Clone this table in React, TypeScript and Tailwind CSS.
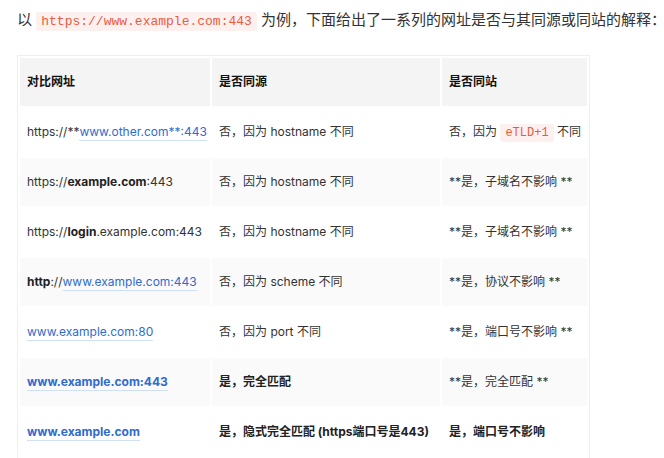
import React from "react";

const font = {
  fontFamily: '"Inter", "Noto Sans CJK SC", sans-serif',
};

function Link({ children, bold }: { children: React.ReactNode; bold?: boolean }) {
  return (
    <span
      className={`text-[#2f6bd0] border-b border-[#cfe0f5] pb-[1px] ${bold ? "font-bold" : ""}`}
    >
      {children}
    </span>
  );
}

function Code({ children, className = "" }: { children: React.ReactNode; className?: string }) {
  return (
    <code
      className={`bg-[#fdf1f0] text-[#ec5a3f] rounded-[3px] px-[5px] py-[2px] ${className}`}
      style={{ fontFamily: '"Liberation Mono", "DejaVu Sans Mono", monospace' }}
    >
      {children}
    </code>
  );
}

type Row = [React.ReactNode, React.ReactNode, React.ReactNode];

const rows: Row[] = [
  [
    <>
      https://**<Link>www.other.com**:443</Link>
    </>,
    "否，因为 hostname 不同",
    <>
      否，因为 <Code className="text-[12px]">eTLD+1</Code> 不同
    </>,
  ],
  [
    <>
      https://<b className="font-bold text-[#222]">example.com</b>:443
    </>,
    "否，因为 hostname 不同",
    "**是，子域名不影响 **",
  ],
  [
    <>
      https://<b className="font-bold text-[#222]">login</b>.example.com:443
    </>,
    "否，因为 hostname 不同",
    "**是，子域名不影响 **",
  ],
  [
    <>
      <b className="font-bold text-[#222]">http</b>://<Link>www.example.com:443</Link>
    </>,
    "否，因为 scheme 不同",
    "**是，协议不影响 **",
  ],
  [<Link>www.example.com:80</Link>, "否，因为 port 不同", "**是，端口号不影响 **"],
  [
    <Link bold>www.example.com:443</Link>,
    <b className="font-bold text-[#222]">是，完全匹配</b>,
    "**是，完全匹配 **",
  ],
  [
    <Link bold>www.example.com</Link>,
    <b className="font-bold text-[#222]">是，隐式完全匹配 (https端口号是443)</b>,
    <b className="font-bold text-[#222]">是，端口号不影响</b>,
  ],
];

export default function App() {
  return (
    <div className="w-[664px] h-[458px] bg-white overflow-hidden pl-[17px]" style={font}>
      <p className="text-[15px] leading-[20px] text-[#333] pt-[10px] whitespace-nowrap">
        以 <Code className="text-[13px]">https://www.example.com:443</Code> 为例，下面给出了一系列的网址是否与其同源或同站的解释：
      </p>

      <div className="mt-[23px] w-[573px] border border-[#efefef] p-[2px]">
        <div className="grid grid-cols-[190px_228px_145px] gap-[2px] text-[12px] text-[#333]">
          {["对比网址", "是否同源", "是否同站"].map((h) => (
            <div
              key={h}
              className="h-[48px] bg-[#f4f4f4] flex items-center px-[7px] font-bold text-[#111]"
            >
              {h}
            </div>
          ))}
          {rows.map((r, i) =>
            r.map((c, j) => (
              <div
                key={`${i}-${j}`}
                className={`h-[48px] flex items-center px-[7px] whitespace-nowrap ${
                  i % 2 === 1 ? "bg-[#fafafa]" : "bg-white"
                }`}
              >
                <span>{c}</span>
              </div>
            ))
          )}
        </div>
      </div>
    </div>
  );
}
